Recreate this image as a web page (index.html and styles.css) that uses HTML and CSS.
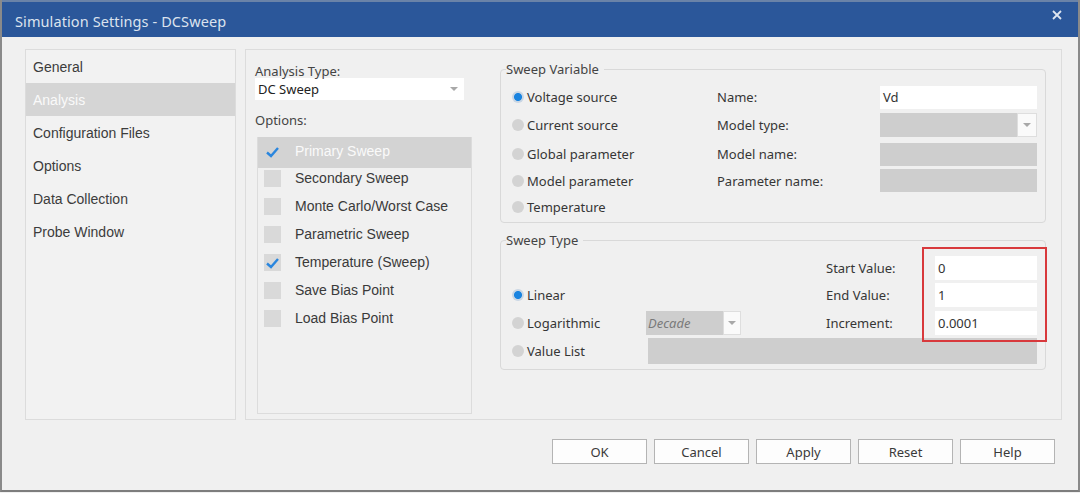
FILE: index.html
```html
<!DOCTYPE html>
<html>
<head>
<meta charset="utf-8">
<link rel="stylesheet" href="styles.css">
</head>
<body>
<div class="window">
  <div class="titlebar">
    <span class="title">Simulation Settings - DCSweep</span>
    <svg class="close" width="10" height="10" viewBox="0 0 10 10"><path d="M1 1L9 9M9 1L1 9" stroke="#dfe6f0" stroke-width="1.8"/></svg>
  </div>
  <div class="content">
    <div class="nav">
      <div class="nav-item">General</div>
      <div class="nav-item sel">Analysis</div>
      <div class="nav-item">Configuration Files</div>
      <div class="nav-item">Options</div>
      <div class="nav-item">Data Collection</div>
      <div class="nav-item">Probe Window</div>
    </div>
    <div class="main">
      <div class="left-col">
        <div class="lbl">Analysis Type:</div>
        <div class="combo white">
          <span>DC Sweep</span>
          <span class="arrow"></span>
        </div>
        <div class="lbl opts-lbl">Options:</div>
        <div class="optlist">
          <div class="opt sel"><span class="cb plain"><svg width="17" height="17" viewBox="0 0 17 17"><path d="M3 9.5L7 13L14 5" fill="none" stroke="#2a86de" stroke-width="2.4"/></svg></span>Primary Sweep</div>
          <div class="opt"><span class="cb"></span>Secondary Sweep</div>
          <div class="opt"><span class="cb"></span>Monte Carlo/Worst Case</div>
          <div class="opt"><span class="cb"></span>Parametric Sweep</div>
          <div class="opt"><span class="cb"><svg width="17" height="17" viewBox="0 0 17 17"><path d="M3 9.5L7 13L14 5" fill="none" stroke="#2a86de" stroke-width="2.4"/></svg></span>Temperature (Sweep)</div>
          <div class="opt"><span class="cb"></span>Save Bias Point</div>
          <div class="opt"><span class="cb"></span>Load Bias Point</div>
        </div>
      </div>
      <div class="right-col">
        <fieldset class="group">
          <legend>Sweep Variable</legend>
          <div class="grid-var">
            <label class="radio"><span class="dot on"></span>Voltage source</label>
            <span class="flabel">Name:</span>
            <div class="field white">Vd</div>

            <label class="radio"><span class="dot"></span>Current source</label>
            <span class="flabel">Model type:</span>
            <div class="combo gray"><span></span><span class="arrow-box"><span class="arrow"></span></span></div>

            <label class="radio"><span class="dot"></span>Global parameter</label>
            <span class="flabel">Model name:</span>
            <div class="field gray"></div>

            <label class="radio"><span class="dot"></span>Model parameter</label>
            <span class="flabel">Parameter name:</span>
            <div class="field gray"></div>

            <label class="radio"><span class="dot"></span>Temperature</label>
          </div>
        </fieldset>
        <fieldset class="group group-type">
          <legend>Sweep Type</legend>
          <div class="grid-type">
            <span class="flabel c3 r1">Start Value:</span>
            <div class="field white c4 r1">0</div>

            <label class="radio c1 r2"><span class="dot on"></span>Linear</label>
            <span class="flabel c3 r2">End Value:</span>
            <div class="field white c4 r2">1</div>

            <label class="radio c1 r3"><span class="dot"></span>Logarithmic</label>
            <div class="combo gray decade c2 r3"><span class="ital">Decade</span><span class="arrow-box"><span class="arrow"></span></span></div>
            <span class="flabel c3 r3">Increment:</span>
            <div class="field white c4 r3">0.0001</div>

            <label class="radio c1 r4"><span class="dot"></span>Value List</label>
            <div class="field gray vlist"></div>

            <div class="highlight"></div>
          </div>
        </fieldset>
      </div>
    </div>
  </div>
  <div class="buttons">
    <button class="btn">OK</button>
    <button class="btn">Cancel</button>
    <button class="btn">Apply</button>
    <button class="btn">Reset</button>
    <button class="btn">Help</button>
  </div>
</div>
</body>
</html>
```

FILE: styles.css
```css
* { box-sizing: border-box; }
html, body { margin: 0; padding: 0; }
body { width: 1080px; height: 493px; overflow: hidden; background: #f0f0f0; }

.window {
  width: 1080px;
  height: 492px;
  background: #f0f0f0;
  border-left: 2px solid #8a8a8a;
  border-right: 2px solid #8a8a8a;
  border-bottom: 2px solid #7d7d7d;
  display: flex;
  flex-direction: column;
}

.titlebar {
  height: 37px;
  background: #2b579a;
  border-top: 2px solid #6a83a8;
  display: flex;
  align-items: center;
  justify-content: space-between;
  padding: 3px 16px 0 13px;
}
.title {
  font-family: "Noto Sans", "Open Sans", sans-serif;
  font-size: 14.5px;
  color: #dbe3ee;
  letter-spacing: 0.1px;
}
.close { margin-top: -12px; }

.content {
  display: flex;
  gap: 9px;
  padding: 12px 14px 0 23px;
}

.nav {
  width: 211px;
  height: 371px;
  border: 1px solid #dcdcdc;
  background: #f2f2f2;
}
.nav-item {
  height: 33px;
  display: flex;
  align-items: center;
  padding-left: 7px;
  font-family: "Liberation Sans", Arial, sans-serif;
  font-size: 14px;
  color: #3c3c3c;
}
.nav-item.sel {
  background: #d5d5d5;
  color: #fafafa;
}

.main {
  width: 817px;
  height: 371px;
  border: 1px solid #dcdcdc;
  display: flex;
  gap: 28px;
  padding-left: 9px;
}

.left-col {
  width: 217px;
  padding-top: 14px;
}
.lbl {
  font-family: "Noto Sans", sans-serif;
  font-size: 13px;
  line-height: 14px;
  height: 14px;
  color: #444;
}
.opts-lbl { margin-top: 13px; }

.combo {
  display: flex;
  align-items: center;
  justify-content: space-between;
  font-family: "Noto Sans", sans-serif;
  font-size: 13px;
  color: #222;
}
.combo.white {
  width: 209px;
  height: 22px;
  background: #fff;
  padding: 0 6px 0 3px;
}
.arrow {
  width: 0;
  height: 0;
  border-left: 4px solid transparent;
  border-right: 4px solid transparent;
  border-top: 4px solid #a8a8a8;
}

.optlist {
  margin-top: 10px;
  margin-left: 2px;
  width: 215px;
  height: 277px;
  border: 1px solid #dcdcdc;
  padding: 0 0 0 6px;
}
.opt {
  height: 28px;
  display: flex;
  align-items: center;
  gap: 14px;
  font-family: "Liberation Sans", Arial, sans-serif;
  font-size: 14px;
  color: #3a3a3a;
  margin-left: -6px;
  padding-left: 6px;
}
.opt.sel {
  background: #d3d3d3;
  box-shadow: 0 3px 0 0 #d3d3d3;
  color: #fafafa;
  margin-top: -1px;
  margin-bottom: -1px;
  padding-top: 0;
}
.cb {
  width: 17px;
  height: 17px;
  background: #d9d9d9;
  display: flex;
}
.cb.plain { background: transparent; }

.right-col {
  width: 546px;
  padding-top: 10px;
}
.group {
  margin: 0;
  border: 1px solid #d9d9d9;
  border-radius: 4px;
  padding: 6px 8px 2px 11px;
  min-width: 0;
}
.group legend {
  font-family: "Noto Sans", sans-serif;
  font-size: 13px;
  line-height: 18px;
  color: #444;
  padding: 0 5px 0 0;
  margin-left: -6px;
}
.group-type {
  margin-top: 8px;
  padding-bottom: 4px;
}

.grid-var {
  display: grid;
  grid-template-columns: 205px 163px 157px;
  grid-template-rows: 26px 30px 28px 25px 27px;
  align-items: center;
}
.grid-type {
  display: grid;
  grid-template-columns: 134px 180px 109px 102px;
  grid-template-rows: 26px 27px 29px 28px;
  align-items: center;
}
.c1 { grid-column: 1; }
.c2 { grid-column: 2; }
.c3 { grid-column: 3; }
.c4 { grid-column: 4; }
.r1 { grid-row: 1; }
.r2 { grid-row: 2; }
.r3 { grid-row: 3; }
.r4 { grid-row: 4; }

.radio {
  display: flex;
  align-items: center;
  gap: 3px;
  font-family: "Noto Sans", sans-serif;
  font-size: 13px;
  color: #363636;
}
.dot {
  width: 12px;
  height: 12px;
  border-radius: 50%;
  background: #d3d3d3;
}
.dot.on {
  background: radial-gradient(circle, #1a84e0 0 3.6px, #c9d6e4 4.4px);
}
.flabel {
  font-family: "Noto Sans", sans-serif;
  font-size: 13px;
  color: #363636;
}
.field {
  height: 23px;
  display: flex;
  align-items: center;
  padding-left: 3px;
  font-family: "Noto Sans", sans-serif;
  font-size: 13px;
  color: #333;
}
.field.white { background: #fff; }
.field.gray { background: #cecece; }
.grid-type .field { height: 24px; }

.combo.gray {
  height: 24px;
  background: #cecece;
}
.arrow-box {
  width: 20px;
  height: 100%;
  background: #fafafa;
  border: 1px solid #dedede;
  display: flex;
  align-items: center;
  justify-content: center;
}
.decade {
  width: 95px;
  height: 23px;
  padding-left: 2px;
}
.decade .arrow-box { width: 18px; }
.ital {
  font-style: italic;
  color: #7a7a7a;
}
.vlist {
  grid-column: 2 / 5;
  grid-row: 4;
  margin-left: 2px;
  height: 26px !important;
}
.highlight {
  grid-column: 4;
  grid-row: 1 / 4;
  align-self: stretch;
  margin: -8px -10px -5px -13px;
  border: 2px solid #d8393c;
  pointer-events: none;
}

.buttons {
  display: flex;
  justify-content: flex-end;
  gap: 7px;
  padding: 19px 23px 0 0;
}
.btn {
  width: 95px;
  height: 25px;
  margin: 0;
  background: #fdfdfd;
  border: 1px solid #b4b4b4;
  border-radius: 0;
  font-family: "Noto Sans", sans-serif;
  font-size: 13px;
  color: #3a3a3a;
  padding: 0;
}
```
